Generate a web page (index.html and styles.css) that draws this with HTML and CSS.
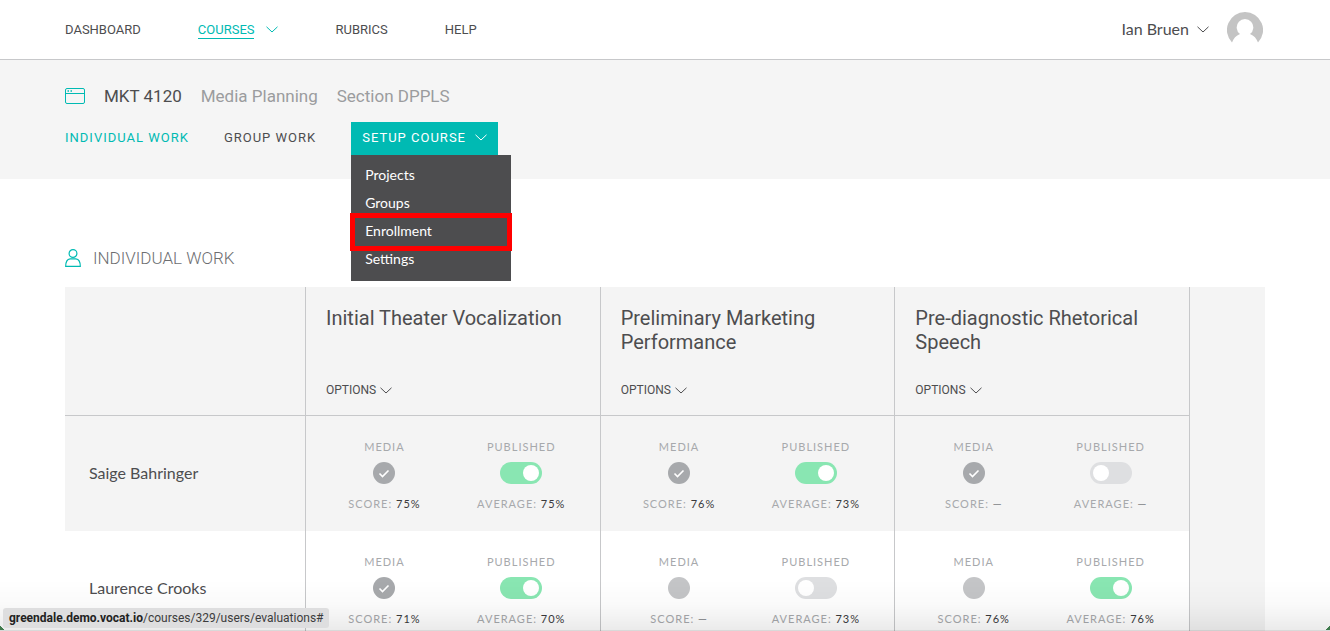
FILE: index.html
```html
<!DOCTYPE html>
<html lang="en">
<head>
<meta charset="utf-8">
<title>MKT 4120 – Individual Work</title>
<link rel="stylesheet" href="styles.css">
</head>
<body>
<svg class="sprite" aria-hidden="true">
  <symbol id="chevron" viewBox="0 0 12 7"><path d="M.5 .8 6 6 11.500 .8" fill="none" stroke="currentColor"/></symbol>
  <symbol id="check" viewBox="0 0 22 22"><path d="M6.500 11.500 9.500 14.500 15.500 8.500" fill="none" stroke="currentColor" stroke-width="1.600"/></symbol>
</svg>

<header class="topbar">
  <div class="container topbar-inner">
    <nav class="main-nav">
      <a href="#">DASHBOARD</a>
      <a href="#" class="current"><span>COURSES</span><svg class="chevron"><use href="#chevron"/></svg></a>
      <a href="#">RUBRICS</a>
      <a href="#">HELP</a>
    </nav>
    <button class="user" type="button">
      <span>Ian Bruen</span><svg class="chevron"><use href="#chevron"/></svg>
      <svg class="avatar" viewBox="0 0 36 36"><path fill="#c4c4c4" d="M18 0a18 18 0 0 1 13 30.500C29.500 26.500 27 23.500 23 22a8.300 8.300 0 1 0-10 0C9 23.500 6.500 26.500 5 30.500A18 18 0 0 1 18 0z"/></svg>
    </button>
  </div>
</header>

<section class="course">
  <div class="container">
    <h1 class="course-title">
      <svg class="window-icon" viewBox="0 0 20 16"><rect x=".5" y=".5" width="19" height="15" rx="1.500" fill="none" stroke="currentColor"/><path d="M0 5.500h20" stroke="currentColor"/><path d="M2.500 3h1.500M5.500 3h1.500" stroke="currentColor" stroke-width="1.500"/></svg>
      <strong>MKT 4120</strong><span>Media Planning</span><span>Section DPPLS</span>
    </h1>
    <nav class="course-nav">
      <a href="#" class="current">INDIVIDUAL WORK</a>
      <a href="#">GROUP WORK</a>
      <div class="setup">
        <button class="setup-button" type="button"><span>SETUP COURSE</span><svg class="chevron"><use href="#chevron"/></svg></button>
        <ul class="menu">
          <li><a href="#">Projects</a></li>
          <li><a href="#">Groups</a></li>
          <li class="highlighted"><a href="#">Enrollment</a></li>
          <li><a href="#">Settings</a></li>
        </ul>
      </div>
    </nav>
  </div>
</section>

<main class="container">
  <h2 class="section-title">
    <svg class="person-icon" viewBox="0 0 16 18"><g fill="none" stroke="currentColor" stroke-width="1.200"><circle cx="8" cy="4.500" r="3.900"/><path d="M.7 17.400c0-5 1.900-7.200 4.400-7.500h5.800c2.500.3 4.400 2.500 4.400 7.500z"/></g></svg>
    INDIVIDUAL WORK
  </h2>
  <table class="grid">
    <colgroup><col class="col-name"><col><col><col><col class="col-rest"></colgroup>
    <thead>
      <tr>
        <td></td>
        <th scope="col"><div class="project"><h3>Initial Theater Vocalization</h3><button type="button">OPTIONS<svg class="chevron"><use href="#chevron"/></svg></button></div></th>
        <th scope="col"><div class="project"><h3>Preliminary Marketing Performance</h3><button type="button">OPTIONS<svg class="chevron"><use href="#chevron"/></svg></button></div></th>
        <th scope="col"><div class="project"><h3>Pre-diagnostic Rhetorical Speech</h3><button type="button">OPTIONS<svg class="chevron"><use href="#chevron"/></svg></button></div></th>
        <td class="rest"></td>
      </tr>
    </thead>
    <tbody>
      <tr>
        <th scope="row">Saige Bahringer</th>
        <td><div class="work">
          <div class="stat"><span>MEDIA</span><svg class="media done"><use href="#check"/></svg><span>SCORE: <b>75%</b></span></div>
          <div class="stat"><label for="p1">PUBLISHED</label><input id="p1" type="checkbox" class="toggle" checked><span>AVERAGE: <b>75%</b></span></div>
        </div></td>
        <td><div class="work">
          <div class="stat"><span>MEDIA</span><svg class="media done"><use href="#check"/></svg><span>SCORE: <b>76%</b></span></div>
          <div class="stat"><label for="p2">PUBLISHED</label><input id="p2" type="checkbox" class="toggle" checked><span>AVERAGE: <b>73%</b></span></div>
        </div></td>
        <td><div class="work">
          <div class="stat"><span>MEDIA</span><svg class="media done"><use href="#check"/></svg><span>SCORE: <b class="none">—</b></span></div>
          <div class="stat"><label for="p3">PUBLISHED</label><input id="p3" type="checkbox" class="toggle"><span>AVERAGE: <b class="none">—</b></span></div>
        </div></td>
        <td class="rest"></td>
      </tr>
      <tr>
        <th scope="row">Laurence Crooks</th>
        <td><div class="work">
          <div class="stat"><span>MEDIA</span><svg class="media done"><use href="#check"/></svg><span>SCORE: <b>71%</b></span></div>
          <div class="stat"><label for="p4">PUBLISHED</label><input id="p4" type="checkbox" class="toggle" checked><span>AVERAGE: <b>70%</b></span></div>
        </div></td>
        <td><div class="work">
          <div class="stat"><span>MEDIA</span><svg class="media"></svg><span>SCORE: <b class="none">—</b></span></div>
          <div class="stat"><label for="p5">PUBLISHED</label><input id="p5" type="checkbox" class="toggle"><span>AVERAGE: <b>73%</b></span></div>
        </div></td>
        <td><div class="work">
          <div class="stat"><span>MEDIA</span><svg class="media"></svg><span>SCORE: <b>76%</b></span></div>
          <div class="stat"><label for="p6">PUBLISHED</label><input id="p6" type="checkbox" class="toggle" checked><span>AVERAGE: <b>76%</b></span></div>
        </div></td>
        <td class="rest"></td>
      </tr>
    </tbody>
  </table>
</main>

<div class="window-edge"></div>
<div class="link-status"><b>greendale.demo.vocat.io</b>/courses/329/users/evaluations#</div>
</body>
</html>
```
FILE: styles.css
```css
* { box-sizing: border-box; }

body {
  height: 100vh;
  margin: 0;
  overflow: hidden;
  background: #fff;
  color: #4d4d4f;
  font-family: "Lato", sans-serif;
  font-size: 16px;
}

h1, h2, h3, ul { margin: 0; padding: 0; font-weight: 400; }
h1, h2, h3, .main-nav, .course-nav { font-family: "Roboto", sans-serif; }
a { color: inherit; text-decoration: none; }
button { padding: 0; border: 0; background: none; color: inherit; font: inherit; cursor: pointer; }

.sprite { display: none; }
.chevron { width: 12px; height: 7px; flex: none; }

.container { max-width: 1200px; margin: 0 auto; }

.topbar { border-bottom: 1px solid #c7c8ca; }
.topbar-inner { display: flex; justify-content: space-between; align-items: center; height: 59px; }
.main-nav { display: flex; align-items: center; gap: 57px; font-size: 13px; line-height: 17px; }
.main-nav .current { display: flex; align-items: center; gap: 12px; color: #00bab3; }
.main-nav .current span { border-bottom: 1px solid; margin-top: 1px; }
.user { display: flex; align-items: center; gap: 8px; padding-right: 2px; }
.user span { padding-bottom: 3px; }
.avatar { width: 36px; height: 36px; margin-left: 10px; }

.course { height: 119px; padding-top: 23px; background: #f5f5f5; }
.course-title { display: flex; align-items: center; gap: 19px; font-size: 17px; line-height: 26px; color: #9b9c9e; }
.course-title strong { font-weight: 400; color: #4d4d4f; }
.window-icon { width: 20px; height: 16px; color: #00bab3; }

.course-nav { display: flex; align-items: center; gap: 35px; margin-top: 13px; font-size: 13px; letter-spacing: 1px; }
.course-nav > a { padding-bottom: 2px; }
.course-nav .current { color: #00bab3; }
.setup { position: relative; }
.setup-button { display: flex; align-items: center; gap: 9px; height: 33px; padding: 0 11px 2px; background: #00bab3; color: #fff; letter-spacing: 1px; }
.menu {
  position: absolute;
  top: 100%;
  left: 0;
  z-index: 2;
  width: 160px;
  padding: 6px 0 8px;
  background: #4d4d4f;
  color: #fff;
  font-family: "Lato", sans-serif;
  font-size: 14px;
  line-height: 28px;
  letter-spacing: normal;
  list-style: none;
}
.menu a { display: block; padding: 0 14px; }
.highlighted { position: relative; }
.highlighted::after { content: ""; position: absolute; inset: -4px -1px -6px; border: 5px solid #f00; }

.section-title { display: flex; align-items: center; gap: 12px; padding: 65px 0 15px; font-size: 17px; font-weight: 300; line-height: 28px; color: #6d6e71; }
.person-icon { width: 16px; height: 18px; color: #00bab3; }

.grid { width: 100%; table-layout: fixed; border-collapse: separate; border-spacing: 0; }
.grid td, .grid th { padding: 0; font-weight: 400; text-align: left; }
.grid td, .grid thead th { border-left: 1px solid #c7c8ca; }
.grid thead td:first-child { border-left: 0; }
.grid thead, .grid tbody tr:nth-child(odd), .grid .rest { background: #f4f4f4; }
.grid thead th, .grid thead td:first-child { border-bottom: 1px solid #c7c8ca; }
.grid tbody th { padding: 0 0 2px 24px; }
.col-name { width: 240px; }
.col-rest { width: 76px; }

.project { display: flex; flex-direction: column; justify-content: space-between; align-items: flex-start; height: 128px; padding: 19px 20px 17px; }
.project h3 { font-size: 20px; line-height: 24px; }
.project button { display: flex; align-items: center; gap: 4px; font-family: "Roboto", sans-serif; font-size: 12px; line-height: 16px; }

.work { display: grid; grid-template-columns: 1fr 1fr; height: 115px; padding: 23px 10px 0; }
.stat { display: flex; flex-direction: column; align-items: center; gap: 7px; font-size: 11px; line-height: 16px; letter-spacing: 1px; color: #a7a9ac; }
.stat > :last-child { margin-top: 5px; }
.stat b { font-weight: 400; color: #3a3a3c; }
.stat .none { font-weight: 700; color: #939598; }
.media { width: 22px; height: 22px; border-radius: 50%; background: #c4c5c7; color: #fff; }
.media.done { background: #a7a9ac; }
.toggle { appearance: none; width: 42px; height: 22px; margin: 0; padding: 3px; border-radius: 11px; background: #dedfe1; }
.toggle::before { content: ""; display: block; width: 16px; height: 16px; border-radius: 50%; background: #fff; }
.toggle:checked { background: #89e6b2; }
.toggle:checked::before { margin-left: auto; }

.window-edge {
  position: fixed;
  inset: auto 0 0;
  height: 52px;
  border-bottom: 1px solid rgba(0, 0, 0, .15);
  background:
    linear-gradient(45deg, #3f7a4c 50%, transparent 50%) left bottom / 4px 4px no-repeat,
    linear-gradient(-45deg, #3f7a4c 50%, transparent 50%) right bottom / 4px 4px no-repeat,
    linear-gradient(transparent, rgba(0, 0, 0, .02) 50%, rgba(0, 0, 0, .08));
  pointer-events: none;
}
.link-status {
  position: fixed;
  left: 3px;
  bottom: 3px;
  padding: 0 6px;
  border-radius: 3px;
  background: #dededf;
  color: #3c3c3c;
  font-family: "Roboto", sans-serif;
  font-size: 12px;
  line-height: 20px;
}
.link-status b { font-weight: 700; color: #222; }
```
